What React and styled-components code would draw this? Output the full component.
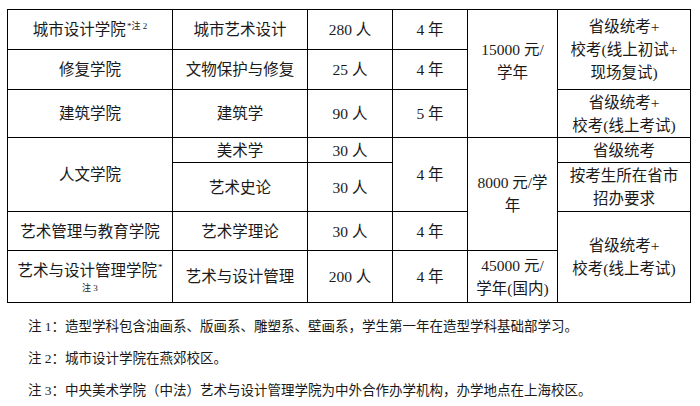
import styled, { createGlobalStyle } from 'styled-components';

const GlobalStyle = createGlobalStyle`
  html, body {
    margin: 0;
    padding: 0;
    background: #ffffff;
  }
  body {
    font-family: "Liberation Serif", "Noto Sans CJK SC", serif;
    color: #1a1a1a;
  }
`;

const Page = styled.div`
  width: 700px;
  height: 406px;
  padding: 9px 0 0 7px;
  box-sizing: border-box;
  overflow: hidden;
`;

const Table = styled.table`
  border-collapse: collapse;
  table-layout: fixed;
  width: 684px;
  font-size: 15.5px;
  line-height: 23px;
`;

const Row = styled.tr`
  height: ${(p) => p.$h}px;
`;

const Cell = styled.td`
  border: 1px solid #000;
  padding: ${(p) => (p.$lift ? `0 2px ${p.$lift}px` : '0 2px')};
  text-align: center;
  vertical-align: middle;
  white-space: nowrap;
`;

const Star = styled.sup`
  font-size: 9px;
  line-height: 0;
  vertical-align: 6px;
  margin-left: 1px;
`;

const Mark = styled.span`
  display: block;
  font-size: 9px;
  line-height: 12px;
`;

const Notes = styled.div`
  margin-top: 15px;
  padding-left: 21px;
  font-size: 13.5px;
  line-height: 18px;
  display: flex;
  flex-direction: column;
  gap: 14px;
`;

const Note = styled.p`
  margin: 0;
  white-space: nowrap;
`;

const widths = [165, 135, 85, 75, 90, 133];

export default function App() {
  return (
    <>
      <GlobalStyle />
      <Page>
        <Table>
          <colgroup>
            {widths.map((w, i) => (
              <col key={i} style={{ width: w }} />
            ))}
          </colgroup>
          <tbody>
            <Row $h={40}>
              <Cell>
                城市设计学院<Star>*注 2</Star>
              </Cell>
              <Cell>城市艺术设计</Cell>
              <Cell>280 人</Cell>
              <Cell>4 年</Cell>
              <Cell rowSpan={3} $lift={26}>
                15000 元/
                <br />
                学年
              </Cell>
              <Cell rowSpan={2}>
                省级统考+
                <br />
                校考(线上初试+
                <br />
                现场复试)
              </Cell>
            </Row>
            <Row $h={40}>
              <Cell>修复学院</Cell>
              <Cell>文物保护与修复</Cell>
              <Cell>25 人</Cell>
              <Cell>4 年</Cell>
            </Row>
            <Row $h={48}>
              <Cell>建筑学院</Cell>
              <Cell>建筑学</Cell>
              <Cell>90 人</Cell>
              <Cell>5 年</Cell>
              <Cell>
                省级统考+
                <br />
                校考(线上考试)
              </Cell>
            </Row>
            <Row $h={25}>
              <Cell rowSpan={2}>人文学院</Cell>
              <Cell>美术学</Cell>
              <Cell>30 人</Cell>
              <Cell rowSpan={2}>4 年</Cell>
              <Cell rowSpan={3}>
                8000 元/学
                <br />
                年
              </Cell>
              <Cell>省级统考</Cell>
            </Row>
            <Row $h={49}>
              <Cell>艺术史论</Cell>
              <Cell>30 人</Cell>
              <Cell>
                按考生所在省市
                <br />
                招办要求
              </Cell>
            </Row>
            <Row $h={39}>
              <Cell>艺术管理与教育学院</Cell>
              <Cell>艺术学理论</Cell>
              <Cell>30 人</Cell>
              <Cell>4 年</Cell>
              <Cell rowSpan={2}>
                省级统考+
                <br />
                校考(线上考试)
              </Cell>
            </Row>
            <Row $h={52}>
              <Cell>
                艺术与设计管理学院<Star>*</Star>
                <Mark>注 3</Mark>
              </Cell>
              <Cell>艺术与设计管理</Cell>
              <Cell>200 人</Cell>
              <Cell>4 年</Cell>
              <Cell>
                45000 元/
                <br />
                学年(国内)
              </Cell>
            </Row>
          </tbody>
        </Table>
        <Notes>
          <Note>注 1：造型学科包含油画系、版画系、雕塑系、壁画系，学生第一年在造型学科基础部学习。</Note>
          <Note>注 2：城市设计学院在燕郊校区。</Note>
          <Note>注 3：中央美术学院（中法）艺术与设计管理学院为中外合作办学机构，办学地点在上海校区。</Note>
        </Notes>
      </Page>
    </>
  );
}
